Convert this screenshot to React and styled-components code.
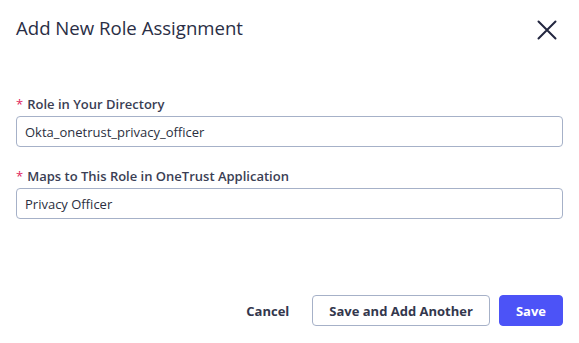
import React from "react";
import styled, { createGlobalStyle } from "styled-components";

const Global = createGlobalStyle`
  html, body { margin: 0; padding: 0; background: #ffffff; }
  body { font-family: "Open Sans", "Noto Sans", sans-serif; }
  * { box-sizing: border-box; }
`;

const Dialog = styled.div`
  width: 579px;
  height: 343px;
  display: flex;
  flex-direction: column;
  background: #ffffff;
`;

const Header = styled.div`
  display: flex;
  align-items: flex-start;
  justify-content: space-between;
  padding: 13px 20px 0 16px;
  height: 44px;
`;

const Title = styled.h2`
  margin: 3px 0 0 0;
  font-size: 18.6px;
  font-weight: 400;
  color: #2a2e45;
  line-height: 24px;
`;

const CloseButton = styled.button`
  border: none;
  background: none;
  padding: 0;
  margin-top: 5px;
  width: 24px;
  height: 24px;
  display: flex;
  align-items: center;
  justify-content: center;
  cursor: pointer;
`;

const Body = styled.div`
  display: flex;
  flex-direction: column;
  gap: 21px;
  padding: 52px 16px 0 16px;
`;

const Field = styled.div`
  display: flex;
  flex-direction: column;
  gap: 4px;
`;

const Label = styled.label`
  font-size: 13px;
  font-weight: 600;
  color: #3a3e54;
  line-height: 16px;
`;

const Required = styled.span`
  color: #e0245e;
  margin-right: 4px;
  font-weight: 400;
`;

const Input = styled.input`
  height: 31px;
  width: 100%;
  border: 1px solid #a6b1c8;
  border-radius: 4px;
  padding: 0 8px;
  font-family: inherit;
  font-size: 13px;
  color: #2b2f40;
  background: #ffffff;
  outline: none;
`;

const Footer = styled.div`
  margin-top: auto;
  display: flex;
  justify-content: flex-end;
  align-items: center;
  gap: 9px;
  padding: 0 16px 17px 16px;
`;

const Button = styled.button`
  height: 31px;
  padding: 0 ${(p) => (p.$variant === "link" ? "13px" : "16px")};
  border-radius: 4px;
  font-family: inherit;
  font-size: 13px;
  font-weight: 700;
  cursor: pointer;
  border: 1px solid
    ${(p) =>
      p.$variant === "primary"
        ? "#4c53f7"
        : p.$variant === "secondary"
        ? "#a6b1c8"
        : "transparent"};
  background: ${(p) => (p.$variant === "primary" ? "#4c53f7" : "#ffffff")};
  color: ${(p) => (p.$variant === "primary" ? "#ffffff" : "#33374d")};
`;

export default function App() {
  return (
    <>
      <Global />
      <Dialog>
        <Header>
          <Title>Add New Role Assignment</Title>
          <CloseButton aria-label="Close">
            <svg width="20" height="20" viewBox="0 0 20 20">
              <path
                d="M1.5 1.5 L18.5 18.5 M18.5 1.5 L1.5 18.5"
                stroke="#22263f"
                strokeWidth="2"
                strokeLinecap="round"
              />
            </svg>
          </CloseButton>
        </Header>
        <Body>
          <Field>
            <Label>
              <Required>*</Required>Role in Your Directory
            </Label>
            <Input defaultValue="Okta_onetrust_privacy_officer" />
          </Field>
          <Field>
            <Label>
              <Required>*</Required>Maps to This Role in OneTrust Application
            </Label>
            <Input defaultValue="Privacy Officer" />
          </Field>
        </Body>
        <Footer>
          <Button $variant="link">Cancel</Button>
          <Button $variant="secondary">Save and Add Another</Button>
          <Button $variant="primary">Save</Button>
        </Footer>
      </Dialog>
    </>
  );
}
